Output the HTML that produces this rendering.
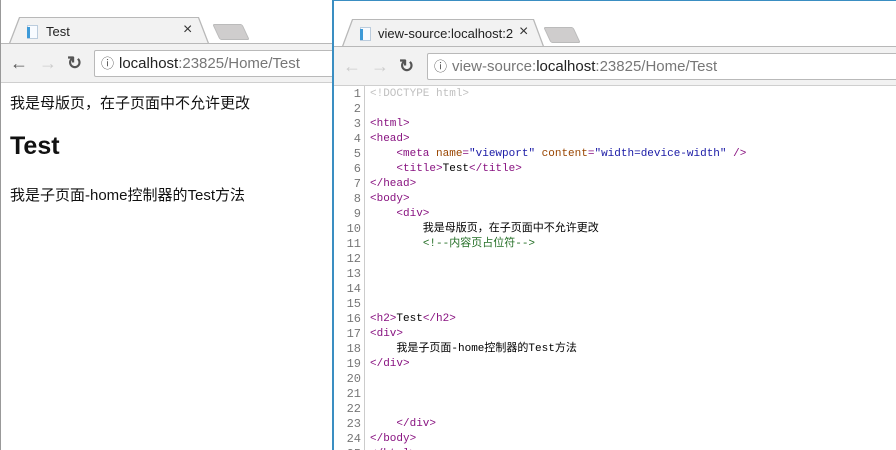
<!DOCTYPE html>
<html><head><style>
*{margin:0;padding:0;box-sizing:border-box}
body{width:896px;height:450px;overflow:hidden;background:#fff;position:relative;font-family:"Liberation Sans","Noto Sans CJK SC",sans-serif}
.win{position:absolute;top:0;height:450px;background:#fff;overflow:hidden}
.tab{position:absolute;background:#f2f2f2}
.tb{position:absolute;left:0;right:0;background:#f2f2f2;border-top:1px solid #b8b8b8;border-bottom:1px solid #cfcfcf}
.omni{position:absolute;background:#fff;border:1px solid #b9b9b9;border-radius:2px;font-size:15px;color:#777;white-space:nowrap;padding-left:24px;line-height:25px}
.omni b{font-weight:normal;color:#222}
.ic{position:absolute;font-size:18px;line-height:20px;font-weight:bold}
.newtab{position:absolute;width:30px;height:16px;background:#cfcdcd;border:1px solid #bbb;transform:skewX(25deg);border-radius:2px}
.fav{position:absolute;width:11px;height:14px;border:1px solid #bcd;background:#f8fbff}
.fav:before{content:"";position:absolute;left:-1px;top:1px;width:3px;height:11px;background:#3d9ad8}
pre{font-family:"Liberation Mono","Noto Sans CJK SC",monospace;font-size:11px;line-height:15px}
.t{color:#881280}.a{color:#994500}.v{color:#1a1aa6}.c{color:#236e25}.d{color:#c0c0c0}
</style></head><body>

<div class="win" style="left:0;width:333px;border-left:1px solid #999">
 <div class="tab" style="left:8px;top:17px;width:200px;height:26px;clip-path:polygon(10px 0,190px 0,200px 26px,0 26px);background:#b8b8b8"></div>
 <div class="tab" style="left:9px;top:18px;width:198px;height:26px;clip-path:polygon(10px 0,188px 0,198px 26px,0 26px)"></div>
 <div class="fav" style="left:26px;top:25px"></div>
 <div style="position:absolute;left:45px;top:24px;font-size:13px;color:#222">Test</div>
 <div style="position:absolute;left:182px;top:21px;font-size:16px;color:#333">×</div>
 <div class="newtab" style="left:215px;top:24px"></div>
 <div class="tb" style="top:43px;height:40px"></div>
 <div class="ic" style="left:9px;top:53px;color:#555">←</div>
 <div class="ic" style="left:38px;top:53px;color:#ccc">→</div>
 <div class="ic" style="left:66px;top:53px;color:#555">↻</div>
 <div class="omni" style="left:93px;top:50px;width:260px;height:27px"><span style="position:absolute;left:6px;top:0;color:#555;font-size:13px">ⓘ</span><b>localhost</b>:23825/Home/Test</div>
 <div style="position:absolute;left:9px;top:92px;font-size:15px;color:#111">我是母版页，在子页面中不允许更改</div>
 <div style="position:absolute;left:9px;top:132px;font-size:25px;font-weight:bold;color:#111">Test</div>
 <div style="position:absolute;left:9px;top:184px;font-size:15px;color:#111">我是子页面-home控制器的Test方法</div>
</div>

<div class="win" style="left:332px;width:564px;border-left:2px solid #3a8ec2;border-top:1px solid #3a8ec2">
 <div class="tab" style="left:8px;top:18px;width:202px;height:27px;clip-path:polygon(10px 0,192px 0,202px 27px,0 27px);background:#b8b8b8"></div>
 <div class="tab" style="left:9px;top:19px;width:200px;height:27px;clip-path:polygon(10px 0,190px 0,200px 27px,0 27px)"></div>
 <div class="fav" style="left:26px;top:26px"></div>
 <div style="position:absolute;left:44px;top:25px;font-size:13px;color:#222;width:138px;overflow:hidden;white-space:nowrap">view-source:localhost:2</div>
 <div style="position:absolute;left:185px;top:22px;font-size:16px;color:#333">×</div>
 <div class="newtab" style="left:213px;top:26px"></div>
 <div class="tb" style="top:45px;height:40px"></div>
 <div class="ic" style="left:9px;top:55px;color:#ccc">←</div>
 <div class="ic" style="left:37px;top:55px;color:#ccc">→</div>
 <div class="ic" style="left:65px;top:55px;color:#555">↻</div>
 <div class="omni" style="left:93px;top:52px;width:480px;height:27px"><span style="position:absolute;left:6px;top:0;color:#555;font-size:13px">ⓘ</span>view-source:<b>localhost</b>:23825/Home/Test</div>
 <div style="position:absolute;left:0;top:85px;width:31px;height:370px;border-right:1px solid #ccc;background:#fff"></div>
<pre style="position:absolute;left:0;top:86px;width:27px;text-align:right;color:#777;font-size:12px">1
2
3
4
5
6
7
8
9
10
11
12
13
14
15
16
17
18
19
20
21
22
23
24
25</pre>
<pre style="position:absolute;left:36px;top:86px;color:#000"><span class="d">&lt;!DOCTYPE html&gt;</span>

<span class="t">&lt;html&gt;</span>
<span class="t">&lt;head&gt;</span>
    <span class="t">&lt;meta <span class="a">name</span>=<span class="v">"viewport"</span> <span class="a">content</span>=<span class="v">"width=device-width"</span> /&gt;</span>
    <span class="t">&lt;title&gt;</span>Test<span class="t">&lt;/title&gt;</span>
<span class="t">&lt;/head&gt;</span>
<span class="t">&lt;body&gt;</span>
    <span class="t">&lt;div&gt;</span>
        我是母版页，在子页面中不允许更改
        <span class="c">&lt;!--内容页占位符--&gt;</span>




<span class="t">&lt;h2&gt;</span>Test<span class="t">&lt;/h2&gt;</span>
<span class="t">&lt;div&gt;</span>
    我是子页面-home控制器的Test方法
<span class="t">&lt;/div&gt;</span>



    <span class="t">&lt;/div&gt;</span>
<span class="t">&lt;/body&gt;</span>
<span class="t">&lt;/html&gt;</span></pre>
</div>
</body></html>
